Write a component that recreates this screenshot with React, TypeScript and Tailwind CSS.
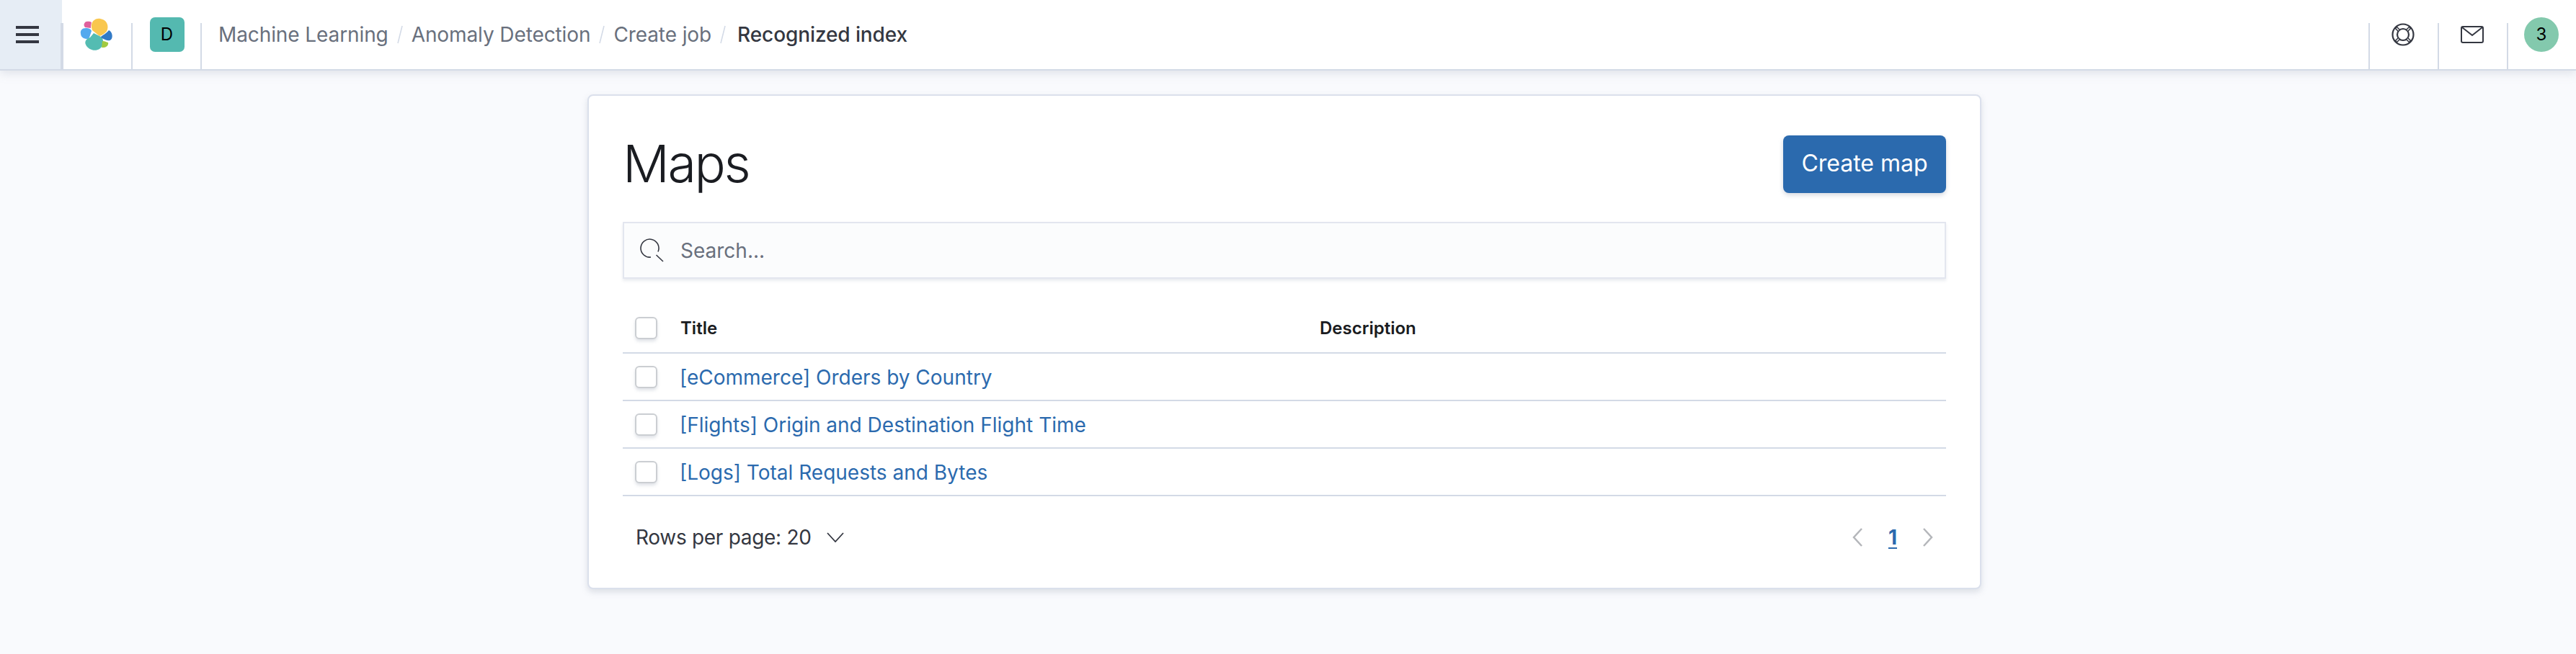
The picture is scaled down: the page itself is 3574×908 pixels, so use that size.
import React from "react";

const font = { fontFamily: "Inter, 'Liberation Sans', sans-serif" };

function Cell({ children, className = "" }: { children?: React.ReactNode; className?: string }) {
  return (
    <div className={`relative flex h-full w-[96px] items-center justify-center ${className}`}>
      <span className="absolute bottom-0 left-0 h-[64px] w-[2px] bg-[#d3dae6]" />
      {children}
    </div>
  );
}

function Logo() {
  return (
    <svg width="46" height="46" viewBox="0 0 46 46" className="block">
      <path d="M16 13 C15 5 21 0 28 1 C36 2 40 9 38 16 C37 20 33 22 30 24 L27 25 L17 17 Z" fill="#f9c74f" />
      <path d="M7 6 C10 4 14 5 16 6 C15 10 15 12 15 14 L7 13 C5 11 5 8 7 6 Z" fill="#e0609c" />
      <path d="M1 22 C0 17 3 14 8 14 C12 14 15 15 16 18 L13 27 C11 30 8 29 5 28 C3 27 1 25 1 22 Z" fill="#54a9ee" />
      <path d="M19 21 L29 26 C34 30 33 39 27 43 C21 47 11 44 8 37 C6 33 8 29 14 27 Z" fill="#54bcb2" />
      <path d="M40 17 C45 19 46 27 43 30 C40 33 35 30 30 28 L29 26 C31 24 36 22 40 17 Z" fill="#327ac6" />
      <path d="M31 32 C35 32 38 34 39 34 C40 37 37 41 33 41 C31 41 30 41 30 41 Z" fill="#a1ca40" />
    </svg>
  );
}

function Crumb({ children, current }: { children: React.ReactNode; current?: boolean }) {
  return <span className={current ? "ml-[4px] font-medium text-[#343741]" : "text-[#69707d]"}>{children}</span>;
}

function Sep() {
  return (
    <svg width="10" height="30" viewBox="0 0 10 30" className="mx-[11px] shrink-0">
      <line x1="8" y1="3" x2="2" y2="27" stroke="#d3dae6" strokeWidth="1.5" />
    </svg>
  );
}

function Checkbox() {
  return (
    <span className="block h-[31px] w-[31px] shrink-0 rounded-[6px] border-2 border-[#cbced2] bg-white shadow-[0_3px_4px_rgba(152,162,179,0.3)]" />
  );
}

function Row({ label }: { label: string }) {
  return (
    <div className="flex h-[66px] items-center border-b-2 border-[#d3dae6] pl-[17px]">
      <Checkbox />
      <a className="ml-[31px] pt-[1px] text-[28px] text-[#2b6aae]">{label}</a>
    </div>
  );
}

export default function App() {
  return (
    <div className="h-[908px] w-[3574px] overflow-hidden bg-[#f9fafd]" style={font}>
      <header className="flex h-[98px] items-stretch border-b-2 border-[#d3dae6] bg-white shadow-[0_4px_12px_rgba(152,162,179,0.25)]">
        <div className="relative flex h-full w-[86px] flex-col items-center justify-center gap-[6px] bg-[#e6edf5]">
          <span className="mr-[10px] h-[4px] w-[32px] bg-[#343741]" />
          <span className="mr-[10px] h-[4px] w-[32px] bg-[#343741]" />
          <span className="mr-[10px] h-[4px] w-[32px] bg-[#343741]" />
          <span className="absolute bottom-0 right-0 h-[64px] w-[2px] bg-[#d3dae6]" />
        </div>
        <Cell className="pr-[1px]"><Logo /></Cell>
        <Cell className="pl-[3px]">
          <div className="flex h-[48px] w-[48px] items-center justify-center rounded-[7px] bg-[#54b9b0] text-[24px] text-black">D</div>
        </Cell>
        <div className="relative flex flex-1 items-center pl-[25px] text-[28px] tracking-[-0.1px]">
          <span className="absolute bottom-0 left-0 h-[64px] w-[2px] bg-[#d3dae6]" />
          <Crumb>Machine Learning</Crumb>
          <Sep />
          <Crumb>Anomaly Detection</Crumb>
          <Sep />
          <Crumb>Create job</Crumb>
          <Sep />
          <Crumb current>Recognized index</Crumb>
        </div>
        <Cell>
          <svg width="32" height="32" viewBox="0 0 32 32" fill="none" stroke="#343741" strokeWidth="2.2">
            <circle cx="16" cy="16" r="14.5" />
            <circle cx="16" cy="16" r="8" />
            <path d="M6 6l4.500 4.500M26 6l-4.500 4.500M6 26l4.500-4.500M26 26l-4.500-4.500" strokeWidth="4.500" />
            <path d="M7 7l3 3M25 7l-3 3M7 25l3-3M25 25l-3-3" stroke="#ffffff" strokeWidth="1.4" />
          </svg>
        </Cell>
        <Cell>
          <svg width="32" height="24" viewBox="0 0 32 24" fill="none" stroke="#343741" strokeWidth="2">
            <rect x="1" y="1" width="30" height="22" rx="2" />
            <path d="M2 2l14 11L30 2" />
          </svg>
        </Cell>
        <Cell className="w-[95px]">
          <div className="flex h-[48px] w-[48px] items-center justify-center rounded-full bg-[#83c9ad] text-[24px] text-black">3</div>
        </Cell>
      </header>

      <main className="ml-[815px] mt-[33px] h-[687px] w-[1934px] rounded-[8px] border-2 border-[#dbe0ec] bg-white px-[47px] pt-[55px] shadow-[0_4px_8px_rgba(152,162,179,0.3)]">
        <div className="flex h-[80px] items-center justify-between">
          <h1 className="pb-[3px] text-[72px] font-light leading-none tracking-[-2.4px] text-[#1a1c21]">Maps</h1>
          <button className="h-[80px] w-[226px] rounded-[8px] bg-[#2b6aae] pb-[2px] text-[32px] text-white shadow-[0_3px_6px_rgba(152,162,179,0.4)]">
            Create map
          </button>
        </div>

        <div className="mt-[40px] flex h-[79px] items-center border-2 border-[#e3e6ef] bg-[#fbfcfd] pl-[22px] shadow-[0_3px_4px_rgba(152,162,179,0.2)]">
          <svg width="33" height="33" viewBox="0 0 33 33" fill="none" stroke="#343741" strokeWidth="1.600" className="shrink-0">
            <path d="M25 18.500 A12.500 12.500 0 1 0 15 26" />
            <path d="M22.500 23 L32 32" />
          </svg>
          <span className="ml-[23px] text-[28px] text-[#69707d]">Search...</span>
        </div>

        <div className="mt-[38px] flex h-[66px] items-center border-b-2 border-[#d3dae6] pb-[3px] pl-[17px] text-[24px] font-semibold text-[#1a1c21]">
          <Checkbox />
          <span className="ml-[32px] w-[887px]">Title</span>
          <span>Description</span>
        </div>
        <Row label="[eCommerce] Orders by Country" />
        <Row label="[Flights] Origin and Destination Flight Time" />
        <Row label="[Logs] Total Requests and Bytes" />

        <div className="flex h-[116px] items-center justify-between pb-[2px] pl-[18px] pr-[18px]">
          <div className="flex items-center text-[28px] tracking-[-0.3px] text-[#343741]">
            Rows per page: 20
            <svg width="24" height="14" viewBox="0 0 24 14" fill="none" stroke="#343741" strokeWidth="1.800" className="ml-[21px]">
              <path d="M1 1l11 12L23 1" />
            </svg>
          </div>
          <div className="flex items-center">
            <svg width="14" height="26" viewBox="0 0 14 26" fill="none" stroke="#b4b6ba" strokeWidth="2.500">
              <path d="M13 1L2 13l11 12" />
            </svg>
            <span className="ml-[36px] text-[28px] font-bold leading-[32px] text-[#2b6aae] underline underline-offset-[4px]">1</span>
            <svg width="14" height="26" viewBox="0 0 14 26" fill="none" stroke="#b4b6ba" strokeWidth="2.500" className="ml-[36px]">
              <path d="M1 1l11 12L1 25" />
            </svg>
          </div>
        </div>
      </main>
    </div>
  );
}
